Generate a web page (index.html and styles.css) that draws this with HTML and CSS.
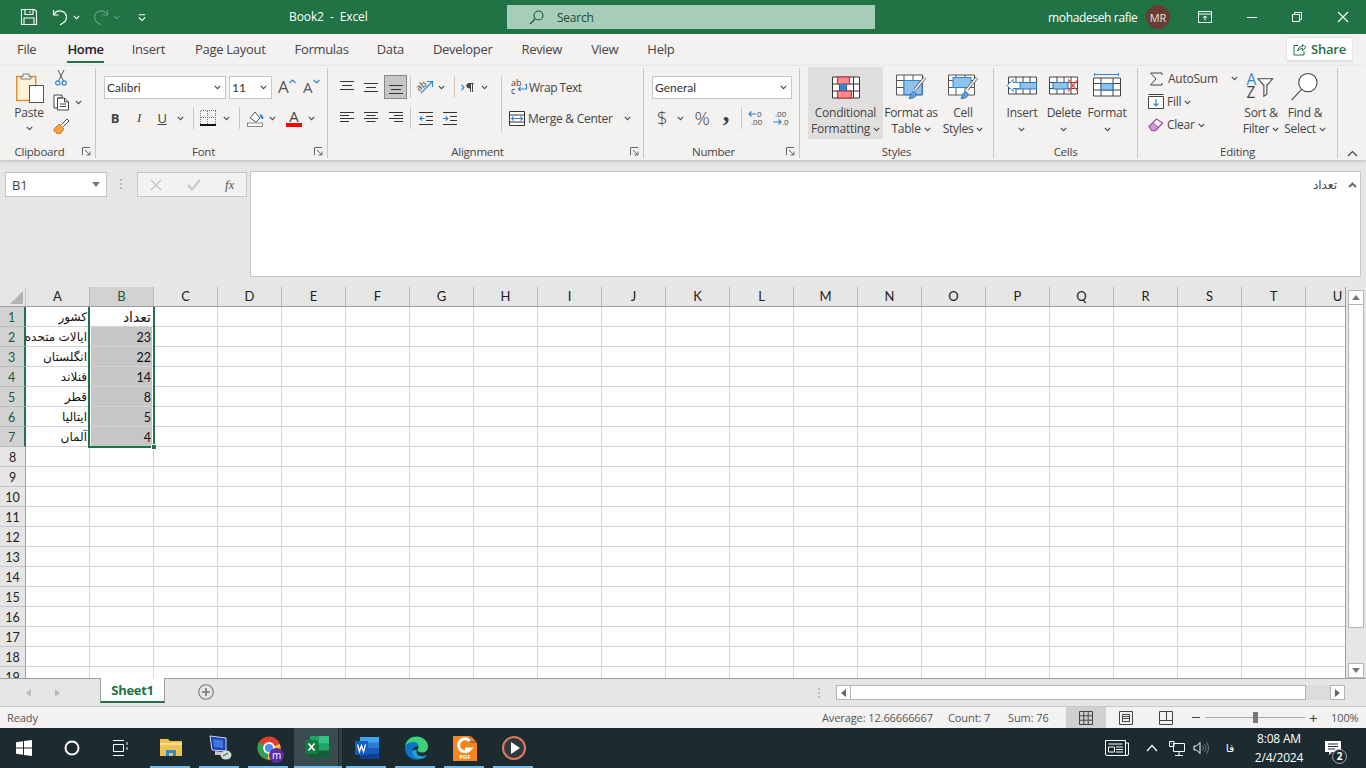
FILE: index.html
```html
<!DOCTYPE html>
<html lang="en">
<head>
<meta charset="utf-8">
<title>Book2 - Excel</title>
<link rel="stylesheet" href="styles.css">
</head>
<body>
<svg class="sprite" aria-hidden="true">
  <symbol id="caret" viewBox="0 0 9 6"><path d="M1 1l3.500 3.500L8 1" fill="none" stroke="#444" stroke-width="1.300"/></symbol>
  <symbol id="launch" viewBox="0 0 9 9"><path d="M.5 8V.5H8M3 3l5 5M8 4.500V8H4.500" fill="none" stroke="#666" stroke-width="1"/></symbol>
</svg>

<header class="titlebar">
  <div class="qat">
    <svg class="q-save" width="18" height="18" viewBox="0 0 18 18"><path d="M1.500 1.500h13l2 2v13h-15zM5 1.500v5h8v-5M4 16.500v-6.500h10v6.500M10 3v2" fill="none" stroke="#fff" stroke-width="1.100"/></svg>
    <svg class="q-undo" width="17" height="18" viewBox="0 0 17 18"><path d="M1.500 2v5h5M1.800 7C3.500 3.500 7 2.300 10.500 3.500c4.500 1.800 5 7 2.500 10L8 17" fill="none" stroke="#fff" stroke-width="1.200"/></svg>
    <svg class="q-caret" width="7" height="5" viewBox="0 0 9 6"><path d="M1 1l3.500 3.500L8 1" fill="none" stroke="#fff" stroke-width="1.300"/></svg>
    <svg class="q-redo" width="17" height="18" viewBox="0 0 17 18"><path d="M15.500 2v5h-5M15.200 7C13.500 3.500 10 2.300 6.500 3.500c-4.500 1.800-5 7-2.500 10L9 17" fill="none" stroke="#5f9c7d" stroke-width="1.200"/></svg>
    <svg class="q-caret2" width="7" height="5" viewBox="0 0 9 6"><path d="M1 1l3.500 3.500L8 1" fill="none" stroke="#5f9c7d" stroke-width="1.300"/></svg>
    <svg class="q-cust" width="8" height="9" viewBox="0 0 9 9"><path d="M1 1.500h7M1 4.500l3.500 3.500L8 4.500" fill="none" stroke="#fff" stroke-width="1.200"/></svg>
  </div>
  <div class="doc-title">Book2&nbsp; -&nbsp; Excel</div>
  <div class="search">
    <svg width="15" height="15" viewBox="0 0 15 15"><circle cx="9.500" cy="5.500" r="4.500" fill="none" stroke="#17593a" stroke-width="1.100"/><path d="M6 9l-5 5" stroke="#17593a" stroke-width="1.200"/></svg>
    <span>Search</span>
  </div>
  <div class="user">mohadeseh rafie</div>
  <div class="avatar">MR</div>
  <div class="win-btns">
    <svg width="14" height="12" viewBox="0 0 14 12"><path d="M.5.500h13v11H.500zM.5 3h13M7 9.500V5M5 6.800L7 5l2 1.800" fill="none" stroke="#fff"/></svg>
    <svg width="12" height="12" viewBox="0 0 12 12"><path d="M1 6.500h10" stroke="#fff"/></svg>
    <svg width="12" height="12" viewBox="0 0 12 12"><path d="M1.500 3.500h7v7h-7zM3.500 3.500v-2h7v7h-2" fill="none" stroke="#fff"/></svg>
    <svg width="12" height="12" viewBox="0 0 12 12"><path d="M1 1l10 10M11 1L1 11" stroke="#fff" stroke-width="1.100"/></svg>
  </div>
</header>

<nav class="tabs">
  <span class="tab">File</span>
  <span class="tab active">Home</span>
  <span class="tab">Insert</span>
  <span class="tab t-pl">Page Layout</span>
  <span class="tab t-fo">Formulas</span>
  <span class="tab">Data</span>
  <span class="tab">Developer</span>
  <span class="tab">Review</span>
  <span class="tab">View</span>
  <span class="tab">Help</span>
  <button class="share">
    <svg width="14" height="14" viewBox="0 0 14 14"><path d="M5 3.500H1v9.500h10V9M4.500 9c.5-3 2.500-4.500 5-4.500V2.500L13 5.500 9.500 8.500V6.500C7.500 6.500 5.500 7.500 4.500 9z" fill="none" stroke="#217346"/></svg>
    Share
  </button>
</nav>

<section class="ribbon">
  <!-- Clipboard -->
  <div class="group g-clip">
    <div class="body">
      <div class="paste">
        <svg width="30" height="32" viewBox="0 0 30 32"><rect x=".7" y="4.500" width="19" height="24" fill="#fdf3d8" stroke="#e08a2c" stroke-width="1.400"/><path d="M7 4.500V2h6v2.500h2v2.500H5V4.500z" fill="#f3f2f1" stroke="#777"/><rect x="13.500" y="13.500" width="14" height="17" fill="#fff" stroke="#555"/></svg>
        <span>Paste</span>
        <svg class="caret"><use href="#caret"/></svg>
      </div>
      <div class="clip-tools">
        <svg class="cut" width="12" height="17" viewBox="0 0 12 17"><path d="M3 1l5.500 11M9 1L3.500 12" stroke="#555" fill="none"/><circle cx="2.800" cy="14" r="2.100" fill="none" stroke="#2b88d8" stroke-width="1.200"/><circle cx="9.200" cy="14" r="2.100" fill="none" stroke="#2b88d8" stroke-width="1.200"/></svg>
        <div class="copy">
          <svg width="17" height="17" viewBox="0 0 17 17"><path d="M1 1h8v3H4.500v10H1zM4.500 4h7l4 4v8h-11zM11.500 4v4h4M7 10h6M7 12.500h6" fill="#fff" stroke="#444"/></svg>
          <svg class="caret"><use href="#caret"/></svg>
        </div>
        <svg class="painter" width="17" height="17" viewBox="0 0 17 17"><path d="M1 11l5-5 5 5-4 5-2-1-1 1-1-2-2-1z" fill="#f0a24a" stroke="#d9772a"/><path d="M8 7l6-6 2 2-6 6" fill="#fff" stroke="#444"/></svg>
      </div>
    </div>
    <div class="label with-launch">Clipboard<svg class="launch"><use href="#launch"/></svg></div>
  </div>

  <!-- Font -->
  <div class="group g-font">
    <div class="body col">
      <div class="row r-font1">
        <div class="select s-font"><span>Calibri</span><svg class="caret"><use href="#caret"/></svg></div>
        <div class="select s-size"><span>11</span><svg class="caret"><use href="#caret"/></svg></div>
        <div class="ab ab-up">A<svg width="7" height="5" viewBox="0 0 7 5"><path d="M.5 4l3-3 3 3" fill="none" stroke="#2b88d8" stroke-width="1.100"/></svg></div>
        <div class="ab ab-down">A<svg width="7" height="5" viewBox="0 0 7 5"><path d="M.5 1l3 3 3-3" fill="none" stroke="#2b88d8" stroke-width="1.100"/></svg></div>
      </div>
      <div class="row r-font2">
        <b class="ib w24 fmt-b">B</b>
        <i class="ib w24 fmt-i">I</i>
        <u class="ib w22 fmt-u">U</u>
        <span class="ib w14"><svg class="caret"><use href="#caret"/></svg></span>
        <span class="sep s1"></span>
        <span class="ib w24"><svg class="crisp" width="16" height="16" viewBox="0 0 16 16"><path d="M.5.500h15M.5 7.500h15M.5.500v14M7.500.500v14M15.500.500v14" fill="none" stroke="#777" stroke-dasharray="1 1"/><path d="M0 15h16" stroke="#111" stroke-width="1.500"/></svg></span>
        <span class="ib w12"><svg class="caret"><use href="#caret"/></svg></span>
        <span class="sep s2"></span>
        <span class="ib w24"><svg width="17" height="17" viewBox="0 0 17 17"><path d="M3 8l5-6 5 6-4 4z" fill="#fff" stroke="#555"/><path d="M13 5c2 1 2.500 3 2.500 4" fill="none" stroke="#2b88d8" stroke-width="2"/><rect x=".5" y="13" width="15" height="3.500" fill="#fff" stroke="#8a8886"/></svg></span>
        <span class="ib w11"><svg class="caret"><use href="#caret"/></svg></span>
        <span class="ib w24 ml4 color-a">A<em></em></span>
        <span class="ib w10"><svg class="caret"><use href="#caret"/></svg></span>
      </div>
    </div>
    <div class="label with-launch">Font<svg class="launch"><use href="#launch"/></svg></div>
  </div>

  <!-- Alignment -->
  <div class="group g-align">
    <div class="body">
      <div class="col">
        <div class="row">
          <span class="ib w24"><svg width="14" height="14" viewBox="0 0 14 14"><path d="M0 1.500h14M2 5.500h10M0 9.500h14" stroke="#333"/></svg></span>
          <span class="ib w24"><svg width="14" height="14" viewBox="0 0 14 14"><path d="M0 3.500h14M2 7.500h10M0 11.500h14" stroke="#333"/></svg></span>
          <span class="ib w23 ml1 pressed"><svg width="14" height="14" viewBox="0 0 14 14"><path d="M0 5.500h14M2 9.500h10M0 13.500h14" stroke="#333"/></svg></span>
          <span class="sep s3"></span>
          <span class="ib w22"><svg width="17" height="16" viewBox="0 0 17 16"><text class="ori" x="0" y="9" transform="rotate(-40 6 8)">ab</text><path d="M4 14L15 3M10 2.500h5.500V8" fill="none" stroke="#2b88d8" stroke-width="1.200"/></svg></span>
          <span class="ib w10"><svg class="caret"><use href="#caret"/></svg></span>
          <span class="sep s4"></span>
          <span class="ib w24 rtl-ic"><svg width="13" height="9" viewBox="0 0 13 9"><path d="M.5 2l2.500 2.500L.5 7" fill="none" stroke="#2b88d8" stroke-width="1.200"/><path d="M8 .5h4.500M8 .5a2.200 2.200 0 000 4.400h1.500V.5M9.500.5V9M11.500.5V9" fill="#444" stroke="#444"/></svg></span>
          <span class="ib w10"><svg class="caret"><use href="#caret"/></svg></span>
        </div>
        <div class="row">
          <span class="ib w24"><svg width="14" height="14" viewBox="0 0 14 14"><path d="M0 1.500h14M0 4.500h9M0 7.500h14M0 10.500h9" stroke="#333"/></svg></span>
          <span class="ib w24"><svg width="14" height="14" viewBox="0 0 14 14"><path d="M0 1.500h14M2.500 4.500h9M0 7.500h14M2.500 10.500h9" stroke="#333"/></svg></span>
          <span class="ib w23 ml1"><svg width="14" height="14" viewBox="0 0 14 14"><path d="M0 1.500h14M5 4.500h9M0 7.500h14M5 10.500h9" stroke="#333"/></svg></span>
          <span class="sep s3"></span>
          <span class="ib w24"><svg width="14" height="13" viewBox="0 0 14 13"><path d="M0 .5h14M7 4.500h7M7 8.500h7M0 12.500h14" stroke="#333"/><path d="M5.500 6.500H1M3 4.500l-2 2 2 2" fill="none" stroke="#2b88d8" stroke-width="1.200"/></svg></span>
          <span class="ib w24"><svg width="14" height="13" viewBox="0 0 14 13"><path d="M0 .5h14M7 4.500h7M7 8.500h7M0 12.500h14" stroke="#333"/><path d="M0 6.500h4.500M2.800 4.500l2 2-2 2" fill="none" stroke="#2b88d8" stroke-width="1.200"/></svg></span>
        </div>
      </div>
      <span class="sep tall"></span>
      <div class="col wrap-col">
        <div class="row">
          <svg class="wrap-ic" width="17" height="16" viewBox="0 0 17 16"><text class="ori" x="0" y="7">ab</text><text class="ori" x="0" y="15">c</text><path d="M14 5.500h1.500v4.500H7.500M9.500 8l-2 2 2 2" fill="none" stroke="#2b88d8" stroke-width="1.200"/></svg>
          <span class="txt t-wrap">Wrap Text</span>
        </div>
        <div class="row r-merge">
          <svg class="merge-ic" width="16" height="15" viewBox="0 0 16 15"><path d="M.5.500h15v14H.500zM.5 4h15M.5 11h15" fill="#fff" stroke="#333"/><path d="M2 7.500h12M4.500 5.500l-2 2 2 2M11.500 5.500l2 2-2 2" fill="none" stroke="#2b88d8" stroke-width="1.100"/></svg>
          <span class="txt t-merge">Merge &amp; Center</span>
          <svg class="caret c-merge"><use href="#caret"/></svg>
        </div>
      </div>
    </div>
    <div class="label with-launch">Alignment<svg class="launch"><use href="#launch"/></svg></div>
  </div>

  <!-- Number -->
  <div class="group g-num">
    <div class="body col">
      <div class="row"><div class="select s-num"><span>General</span><svg class="caret"><use href="#caret"/></svg></div></div>
      <div class="row r-num2">
        <span class="ib w24 big">$</span>
        <span class="ib w12"><svg class="caret"><use href="#caret"/></svg></span>
        <span class="ib w24 ml4 big">%</span>
        <span class="ib w24 comma">,</span>
        <span class="sep s5"></span>
        <span class="ib w24"><svg width="18" height="16" viewBox="0 0 18 16"><text class="dec" x="9" y="7">0</text><text class="dec" x="3" y="15">.00</text><path d="M8 4H1M3.500 1.500L1 4l2.500 2.500" fill="none" stroke="#2b88d8" stroke-width="1.100"/></svg></span>
        <span class="ib w24"><svg width="18" height="16" viewBox="0 0 18 16"><text class="dec" x="3" y="7">.00</text><text class="dec" x="10" y="15">.0</text><path d="M1 12h8M6.500 9.500L9 12l-2.500 2.500" fill="none" stroke="#2b88d8" stroke-width="1.100"/></svg></span>
      </div>
    </div>
    <div class="label with-launch">Number<svg class="launch"><use href="#launch"/></svg></div>
  </div>

  <!-- Styles -->
  <div class="group g-styles">
    <div class="body">
      <div class="lbtn hover w75">
        <svg width="30" height="28" viewBox="0 0 30 28"><path d="M1.500 4.500h27v21h-27zM1.500 11.500h27M1.500 18.500h27M8.500 4.500v21M15.500 4.500v21M22.500 4.500v21" fill="#fff" stroke="#333"/><rect x="6.500" y="4.500" width="12" height="7" fill="#f88a90" stroke="#d13438" stroke-width="1.200"/><rect x="8.500" y="11.500" width="7" height="7" fill="#2b88d8"/><rect x="6.500" y="18.500" width="14" height="7" fill="#f88a90" stroke="#d13438" stroke-width="1.200"/></svg>
        <span class="l2">Conditional<br>Formatting <svg class="caret"><use href="#caret"/></svg></span>
      </div>
      <div class="lbtn w56">
        <svg width="32" height="28" viewBox="0 0 32 28"><path d="M1.500 2.500h26v20h-26zM1.500 8h26M1.500 15h26M9 2.500v20M18 2.500v20" fill="#fff" stroke="#555"/><rect x="9" y="8" width="18" height="14" fill="#8fc3ee" stroke="#2b88d8"/><path d="M20 17L30 5" stroke="#555" stroke-width="3"/><path d="M20 17L30 5" stroke="#fff" stroke-width="1.500"/><path d="M14 26c3 0 7-1 7-4 0-3-3-3-4-2-2 1-1 4-3 6z" fill="#5ba3de" stroke="#2b72b0"/></svg>
        <span class="l2">Format as<br>Table <svg class="caret"><use href="#caret"/></svg></span>
      </div>
      <div class="lbtn w48">
        <svg width="32" height="28" viewBox="0 0 32 28"><path d="M1.500 2.500h26v20h-26zM1.500 8h26M1.500 15h26M9 2.500v20M18 2.500v20" fill="#fff" stroke="#555"/><rect x="6" y="5" width="18" height="10" fill="#8fc3ee" stroke="#2b88d8"/><path d="M20 17L30 5" stroke="#555" stroke-width="3"/><path d="M20 17L30 5" stroke="#fff" stroke-width="1.500"/><path d="M14 26c3 0 7-1 7-4 0-3-3-3-4-2-2 1-1 4-3 6z" fill="#5ba3de" stroke="#2b72b0"/></svg>
        <span class="l2">Cell<br>Styles <svg class="caret"><use href="#caret"/></svg></span>
      </div>
    </div>
    <div class="label">Styles</div>
  </div>

  <!-- Cells -->
  <div class="group g-cells">
    <div class="body">
      <div class="lbtn w42">
        <svg width="32" height="28" viewBox="0 0 32 28"><path d="M2.500 4.500h28v17h-28zM2.500 10h28M2.500 16h28M10 4.500v17M17 4.500v17M24 4.500v17" fill="#fff" stroke="#444"/><rect x="10" y="10" width="20.500" height="6.500" fill="#8fc3ee" stroke="#2b72b0"/><path d="M14 10H7V7l-6 6 6 6v-3h7z" fill="#fff" stroke="#2b88d8"/></svg>
        <span class="l2">Insert<br><svg class="caret"><use href="#caret"/></svg></span>
      </div>
      <div class="lbtn w42">
        <svg width="32" height="28" viewBox="0 0 32 28"><path d="M1.500 4.500h28v17h-28zM1.500 10h28M1.500 16h28M9 4.500v17M16 4.500v17M23 4.500v17" fill="#fff" stroke="#444"/><path d="M5 10h15v6.500H5z" fill="#8fc3ee" stroke="#2b72b0"/><path d="M20 7l10 12M30 7L20 19" stroke="#e8504f" stroke-width="1.300"/></svg>
        <span class="l2">Delete<br><svg class="caret"><use href="#caret"/></svg></span>
      </div>
      <div class="lbtn w44">
        <svg width="32" height="28" viewBox="0 0 32 28"><path d="M3.500.5v3M27.500.5v3M3.500 2h24" stroke="#2b88d8"/><path d="M2.500 5.500h27v18h-27zM2.500 11h27M2.500 17.500h27M10 5.500v18M22 5.500v18" fill="#fff" stroke="#444"/><rect x="10" y="11" width="12" height="6.500" fill="#8fc3ee" stroke="#2b72b0"/></svg>
        <span class="l2">Format<br><svg class="caret"><use href="#caret"/></svg></span>
      </div>
    </div>
    <div class="label">Cells</div>
  </div>

  <!-- Editing -->
  <div class="group g-edit">
    <div class="body">
      <div class="edit-col">
        <div class="e-row">
          <svg class="sum" width="14" height="14" viewBox="0 0 14 14"><path d="M13 3V1H1.500L7 7l-5.500 6H13v-2" fill="none" stroke="#444"/></svg>
          <span class="txt">AutoSum</span>
          <svg class="caret c-auto"><use href="#caret"/></svg>
        </div>
        <div class="e-row">
          <svg width="16" height="15" viewBox="0 0 16 15"><path d="M.5 2.500h15v12H.500z" fill="#fff" stroke="#444"/><path d="M.5.500h15" stroke="#444"/><path d="M8 5v7M5.500 9.500L8 12l2.500-2.500" fill="none" stroke="#2b88d8" stroke-width="1.200"/></svg>
          <span class="txt">Fill <svg class="caret"><use href="#caret"/></svg></span>
        </div>
        <div class="e-row">
          <svg width="16" height="15" viewBox="0 0 16 15"><path d="M1 9.500L8.500 2l6 4-7 7.500H4z" fill="#fff" stroke="#a64dad" stroke-width="1.300"/><path d="M1 9.500L5 6l5 4-3 3.500H4z" fill="#cf9ad6" stroke="#a64dad"/></svg>
          <span class="txt">Clear <svg class="caret"><use href="#caret"/></svg></span>
        </div>
      </div>
      <div class="lbtn w44">
        <svg width="32" height="30" viewBox="0 0 32 30"><text class="az az-a" x="1" y="13">A</text><text class="az" x="1" y="27">Z</text><path d="M13 6h15l-6 7v9l-3 2V13z" transform="translate(0 1)" fill="#fff" stroke="#444" stroke-width="1.100"/></svg>
        <span class="l2">Sort &amp;<br>Filter <svg class="caret"><use href="#caret"/></svg></span>
      </div>
      <div class="lbtn w44">
        <svg width="32" height="30" viewBox="0 0 32 30"><circle cx="19" cy="11" r="9.500" fill="#fff" stroke="#444" stroke-width="1.100"/><path d="M12.500 18L2 29" stroke="#444" stroke-width="1.100"/></svg>
        <span class="l2">Find &amp;<br>Select <svg class="caret"><use href="#caret"/></svg></span>
      </div>
    </div>
    <div class="label">Editing</div>
  </div>
  <div class="collapse"><svg width="11" height="7" viewBox="0 0 11 7"><path d="M1 6l4.500-4.500L10 6" fill="none" stroke="#444" stroke-width="1.200"/></svg></div>
</section>

<section class="formula">
  <div class="namebox"><span>B1</span><i class="tri"></i></div>
  <div class="dots"></div>
  <div class="fbtns">
    <svg width="12" height="12" viewBox="0 0 12 12"><path d="M1 1l10 10M11 1L1 11" stroke="#c8c6c4" stroke-width="1.400"/></svg>
    <svg width="14" height="12" viewBox="0 0 14 12"><path d="M1 6l4 4.500L13 1" fill="none" stroke="#c8c6c4" stroke-width="2"/></svg>
    <span class="fx">fx</span>
  </div>
  <div class="finput"><span dir="rtl">تعداد</span><svg width="9" height="6" viewBox="0 0 9 6"><path d="M1 5l3.500-3.500L8 5" fill="none" stroke="#666" stroke-width="1.800"/></svg></div>
</section>

<main class="sheet">
  <div class="sheet-main">
    <div class="colhdr">
      <div class="corner"><i></i></div>
      <span>A</span><span class="on">B</span><span>C</span><span>D</span><span>E</span><span>F</span><span>G</span><span>H</span><span>I</span><span>J</span><span>K</span><span>L</span><span>M</span><span>N</span><span>O</span><span>P</span><span>Q</span><span>R</span><span>S</span><span>T</span><span>U</span>
    </div>
    <div class="grid-wrap">
      <div class="rowhdr">
        <span class="on">1</span><span class="on">2</span><span class="on">3</span><span class="on">4</span><span class="on">5</span><span class="on">6</span><span class="on">7</span><span>8</span><span>9</span><span>10</span><span>11</span><span>12</span><span>13</span><span>14</span><span>15</span><span>16</span><span>17</span><span>18</span><span>19</span>
      </div>
      <div class="cells">
        <div class="c ar">کشور</div><div class="c ar b1">تعداد</div>
        <div class="c ar">ایالات متحده</div><div class="c hl">23</div>
        <div class="c ar">انگلستان</div><div class="c hl">22</div>
        <div class="c ar">فنلاند</div><div class="c hl">14</div>
        <div class="c ar">قطر</div><div class="c hl">8</div>
        <div class="c ar">ایتالیا</div><div class="c hl">5</div>
        <div class="c ar">آلمان</div><div class="c hl">4</div>
        <div class="sel"><i></i></div>
      </div>
    </div>
  </div>
  <div class="vscroll">
    <div class="sb-btn"><i class="tri up"></i></div>
    <div class="sb-thumb"></div>
    <div class="sb-rest"></div>
    <div class="sb-btn"><i class="tri"></i></div>
  </div>
</main>

<section class="sheetbar">
  <div class="nav-arrows"><i class="ar-l"></i><i class="ar-r"></i></div>
  <div class="sheet-tab">Sheet1</div>
  <svg class="add" width="16" height="16" viewBox="0 0 16 16"><circle cx="8" cy="8" r="7.300" fill="none" stroke="#777" stroke-width="1.100"/><path d="M8 4v8M4 8h8" stroke="#777" stroke-width="1.600"/></svg>
  <div class="vdots"></div>
  <div class="hscroll">
    <div class="hs-btn"><i class="ar-l dark"></i></div>
    <div class="hs-thumb"></div>
    <div class="hs-rest"></div>
    <div class="hs-btn"><i class="ar-r dark"></i></div>
  </div>
</section>

<footer class="status">
  <span class="ready">Ready</span>
  <span class="stat s-avg">Average: 12.66666667</span>
  <span class="stat s-cnt">Count: 7</span>
  <span class="stat s-sum">Sum: 76</span>
  <span class="view on"><svg width="14" height="14" viewBox="0 0 14 14"><path d="M.5.500h13v13H.500zM.5 4.800h13M.5 9.200h13M4.800.500v13M9.200.500v13" fill="none" stroke="#444"/></svg></span>
  <span class="view"><svg width="14" height="14" viewBox="0 0 14 14"><path d="M.5.500h13v13H.500zM3.500 3.500h7v7h-7zM3.500 5.500h7M3.500 7.500h7" fill="none" stroke="#444"/></svg></span>
  <span class="view"><svg width="14" height="14" viewBox="0 0 14 14"><path d="M.5.500h13v13H.500zM.5 9.500h13M7.500.500v9" fill="none" stroke="#444"/></svg></span>
  <span class="zoomctl">
    <i class="minus"></i>
    <span class="slider"><i></i></span>
    <span class="plus">+</span>
  </span>
  <span class="zoomval">100%</span>
</footer>

<footer class="taskbar">
  <span class="tb b48"><svg width="16" height="16" viewBox="0 0 16 16"><path d="M0 2.200l7-1v6.300H0zM8 1l8-1v7.500H8zM0 8.500h7v6.300l-7-1zM8 8.500h8V16l-8-1z" fill="#fff"/></svg></span>
  <span class="tb b48"><svg width="16" height="16" viewBox="0 0 16 16"><circle cx="8" cy="8" r="6.500" fill="none" stroke="#fff" stroke-width="2"/></svg></span>
  <span class="tb b50"><svg width="16" height="16" viewBox="0 0 16 16"><path d="M0 .5h11M0 15.500h11M.5 4.500h10v7H.500zM14 2v3M14 7v3" fill="none" stroke="#fff"/></svg></span>
  <span class="tb run"><svg width="22" height="20" viewBox="0 0 22 20"><path d="M0 1h8l2 2h12v15H0z" fill="#f2c14e"/><path d="M0 5h22v2H0z" fill="#fbe39b"/><path d="M6 12h10v6H6z" fill="#2b88d8"/><path d="M9 15h4v3H9z" fill="#f2c14e"/></svg></span>
  <span class="tb run"><svg width="24" height="26" viewBox="0 0 24 26"><path d="M2 1l16 2v13L4 15z" fill="#1b3fbf" stroke="#cfd8e6"/><path d="M5 4l10 1.200v8L6 12z" fill="#3f77e0"/><path d="M7 16l7 1v3H7z" fill="#c8c8c8"/><ellipse cx="18" cy="20" rx="5.500" ry="4.500" fill="#d8d8d8"/><path d="M15 21l5-3" stroke="#2d8f3c" stroke-width="1.400"/></svg></span>
  <span class="tb run chrome"><svg width="24" height="24" viewBox="0 0 24 24"><circle cx="12" cy="12" r="11.500" fill="#e33b2e"/><path d="M12 12L2 6a11.500 11.500 0 00-.5 10 11.500 11.500 0 009 7.500z" fill="#2ca24c"/><path d="M12 12l10.800-4a11.500 11.500 0 01-12.300 15.500z" fill="#f7c52b"/><circle cx="12" cy="12" r="5" fill="#4e8ff0" stroke="#fff" stroke-width="1.800"/></svg><b class="m">m</b></span>
  <span class="tb active-x"><svg width="24" height="22" viewBox="0 0 24 22"><rect x="5" y="0" width="19" height="22" rx="1" fill="#21a366"/><rect x="14" y="0" width="10" height="7.300" fill="#33c481"/><rect x="5" y="7.300" width="9" height="7.300" fill="#107c41"/><rect x="14" y="14.600" width="10" height="7.400" fill="#185c37"/><rect x="5" y="14.600" width="9" height="7.400" fill="#185c37"/><rect x="0" y="4" width="13" height="14" rx="1" fill="#107c41"/><path d="M3.500 7.500l6 7M9.500 7.500l-6 7" stroke="#fff" stroke-width="1.800"/></svg></span>
  <span class="tb run"><svg width="24" height="22" viewBox="0 0 24 22"><rect x="5" y="0" width="19" height="22" rx="1" fill="#2b7cd3"/><rect x="5" y="0" width="19" height="5.500" fill="#41a5ee"/><rect x="5" y="11" width="19" height="5.500" fill="#185abd"/><rect x="5" y="16.500" width="19" height="5.500" fill="#103f91"/><rect x="0" y="4" width="13" height="14" rx="1" fill="#185abd"/><path d="M2.500 7.500l2 7 2-6 2 6 2-7" fill="none" stroke="#fff" stroke-width="1.300"/></svg></span>
  <span class="tb run"><svg width="24" height="24" viewBox="0 0 24 24"><path d="M1 12C1 5 6 .5 12.500.5 19 .5 24 5 24 10.500c0 4-3 6-6 6-2.500 0-4.500-1-4.500-2.500 0-1 1-1.500 1-3 0-2.500-2.500-4-5-4C5 7 1 9 1 12z" fill="#3ed07a"/><path d="M1 12c0-3 3.500-6 8.500-6 3 0 5 2 5 4.500-4 0-6.500 2-6.500 5.500 0 3.500 3 6.500 7 7.500C7.500 25 1 19.500 1 12z" fill="#0c73c8"/><path d="M8 16c0 4 3.500 7 7.500 7 3 0 6-1.500 7.500-4-2 1-4 1.500-6 1-4-.5-5-3-4-6-3-.5-5 .5-5 2z" fill="#1aa3d9"/></svg></span>
  <span class="tb run"><svg width="24" height="26" viewBox="0 0 24 26"><path d="M0 1h17l7 7v18H0z" fill="#f7851f"/><path d="M17 0l7 7h-7z" fill="#f7851f" stroke="#1b2b30" stroke-width=".6"/><path d="M17 6a6.500 6.500 0 10.500 8H12" fill="none" stroke="#fff" stroke-width="3"/><text class="pdf" x="12" y="24">PDF</text></svg></span>
  <span class="tb run"><svg width="24" height="24" viewBox="0 0 24 24"><circle cx="12" cy="12" r="11" fill="#333a3f" stroke="#e0785a" stroke-width="2"/><path d="M9 6l9 6-9 6z" fill="#fff"/></svg></span>
  <span class="tray">
    <svg width="24" height="16" viewBox="0 0 24 16"><path d="M.5.500h20v15H2a1.500 1.500 0 01-1.500-1.500zM20.500 3h3v11a1.500 1.500 0 01-1.500 1.500h-1.500M3.500 7h6v5h-6zM11 7h7M11 9.500h7M11 12h7M3.500 4h14" fill="none" stroke="#fff"/></svg>
    <svg class="t-up" width="12" height="8" viewBox="0 0 12 8"><path d="M1 7l5-5.500L11 7" fill="none" stroke="#fff" stroke-width="1.200"/></svg>
    <svg class="t-net" width="16" height="15" viewBox="0 0 16 15"><path d="M4.500 2.500h11v8h-11zM10 10.500V14M6 14.500h8M.5.500h4.500v5H.500zM2.500 2.500h.5" fill="none" stroke="#fff"/></svg>
    <svg class="t-snd" width="16" height="14" viewBox="0 0 16 14"><path d="M1 5v4h2.500L7 12.500v-11L3.500 5z" fill="none" stroke="#fff"/><path d="M9.500 4.500a3.500 3.500 0 010 5M11.500 3a6 6 0 010 8M13.500 1.500a8.500 8.500 0 010 11" fill="none" stroke="#777"/></svg>
    <span class="t-fa" dir="rtl">فا</span>
    <span class="clock">8:08 AM<br>2/4/2024</span>
    <span class="notif"><svg width="16" height="15" viewBox="0 0 16 15"><path d="M0 0h16v11H7l-3 3v-3H0z" fill="#fff"/><path d="M3 3h10M3 5.500h10M3 8h7" stroke="#1b2b30"/></svg><b>2</b></span>
  </span>
</footer>
</body>
</html>
```
FILE: styles.css
```css
* { box-sizing: border-box; }
html, body { margin: 0; padding: 0; width: 1366px; height: 768px; overflow: hidden; }
body {
  font-family: "Open Sans", "Noto Sans", "Liberation Sans", sans-serif;
  font-size: 12px;
  letter-spacing: -0.25px;
  color: #444;
  background: #f3f2f1;
  display: flex;
  flex-direction: column;
}
.sprite { display: none; }
svg { display: block; flex: none; overflow: visible; }
.crisp { shape-rendering: crispEdges; }
.caret { width: 7px; height: 5px; display: inline-block; vertical-align: middle; }

/* title bar */
.titlebar { height: 34px; background: #217346; color: #fff; display: flex; align-items: center; flex: none; }
.qat { width: 289px; padding-left: 20px; display: flex; align-items: center; }
.q-undo { margin-left: 14px; }
.q-caret { margin-left: 4px; }
.q-redo { margin-left: 12px; }
.q-caret2 { margin-left: 4px; }
.q-cust { margin-left: 18px; }
.doc-title { width: 218px; font-size: 12px; letter-spacing: -0.1px; padding-bottom: 2px; }
.search { width: 368px; height: 24px; background: #a6cdb8; display: flex; align-items: center; padding-left: 22px; gap: 13px; color: #1d4a33; }
.user { margin-left: 173px; width: 98px; font-size: 12px; letter-spacing: -0.35px; }
.avatar { width: 24px; height: 24px; border-radius: 50%; background: #693d33; color: #e6e0dc; font-size: 11px; display: flex; align-items: center; justify-content: center; letter-spacing: 0; }
.win-btns { margin-left: 28px; width: 168px; display: flex; align-items: center; justify-content: space-between; padding-right: 17px; }

/* tabs */
.tabs { height: 32px; flex: none; display: flex; align-items: center; padding-left: 17px; gap: 29px; font-size: 13px; color: #444; position: relative; padding-bottom: 2px; }
.tab { line-height: 28px; height: 28px; letter-spacing: -0.3px; }
.tab.active { color: #222; font-weight: 600; border-bottom: 2px solid #217346; margin-left: 2px; margin-right: -1px; }
.t-pl { margin-left: 1px; }
.t-fo { margin-right: -1px; }
.share { margin-left: auto; margin-right: 13px; width: 67px; height: 24px; background: #fff; border: 1px solid #e8e6e4; border-radius: 2px; box-shadow: 0 1px 1px #ddd; color: #217346; font: 600 13px "Open Sans", sans-serif; display: flex; align-items: center; justify-content: center; gap: 4px; padding: 0; letter-spacing: -0.2px; }

/* ribbon */
.ribbon { height: 94px; flex: none; display: flex; background: #f3f2f1; box-shadow: 0 1px 3px #b8b8b8; position: relative; z-index: 2; }
.group { display: flex; flex-direction: column; height: 90px; margin-top: 2px; border-right: 1px solid #c8c6c4; position: relative; }
.g-clip { width: 96px; } .g-font { width: 232px; } .g-align { width: 316px; } .g-num { width: 156px; }
.g-styles { width: 194px; } .g-cells { width: 144px; } .g-edit { width: 200px; }
.body { flex: 1; display: flex; min-height: 0; }
.col { display: flex; flex-direction: column; gap: 7px; padding-top: 7px; }
.row { display: flex; align-items: center; height: 24px; }
.label { height: 14px; line-height: 16px; text-align: center; color: #444; font-size: 11.500px; flex: none; }
.label.with-launch { padding-right: 16px; }
.launch { position: absolute; right: 4px; bottom: 2px; width: 9px; height: 9px; }

.ib { height: 24px; display: flex; align-items: center; justify-content: center; flex: none; }
.w24 { width: 24px; } .w23 { width: 23px; } .w22 { width: 22px; } .w14 { width: 14px; } .w12 { width: 12px; } .w11 { width: 11px; } .w10 { width: 10px; }
.ml1 { margin-left: 1px; } .ml4 { margin-left: 4px; }
.sep { width: 1px; height: 22px; background: #c8c6c4; flex: none; }
.s1 { margin: 0 2px 0 6px; } .s2 { margin: 0 3px 0 7px; } .s3 { margin: 0 3px; } .s4 { margin: 0 0 0 8px; } .s5 { margin: 0 3px; }
.sep.tall { height: 56px; margin: 8px 7px 0 5px; }
.pressed { background: #c8c6c4; border: 1px solid #8a8886; }

/* clipboard */
.paste { width: 44px; margin-left: 7px; padding-top: 4px; display: flex; flex-direction: column; align-items: center; }
.paste > svg:first-child { margin-left: 4px; }
.paste span { margin-top: 1px; line-height: 16px; }
.paste .caret { margin-top: 5px; }
.clip-tools { margin-left: 2px; padding-top: 1px; display: flex; flex-direction: column; }
.cut { margin-left: 2px; }
.copy { margin-top: 8px; display: flex; align-items: center; gap: 5px; }
.painter { margin-top: 7px; }

/* font */
.g-font .col { padding-left: 7px; }
.select { height: 23px; background: #fff; border: 1px solid #c8c6c4; display: flex; align-items: center; justify-content: space-between; padding: 0 4px 0 2px; color: #333; flex: none; }
.s-font { width: 122px; margin-left: 1px; font: 12px Lato, sans-serif; letter-spacing: 0; }
.s-size { width: 43px; margin-left: 3px; font: 12px Lato, sans-serif; letter-spacing: 0; }
.s-num { width: 140px; margin-left: 8px; font: 12px Lato, sans-serif; letter-spacing: 0; }
.ab { display: flex; align-items: flex-start; font: 17px "Open Sans", sans-serif; color: #555; letter-spacing: 0; height: 24px; line-height: 24px; }
.ab svg { margin-top: 4px; }
.ab-up { margin-left: 6px; width: 22px; }
.ab-down { margin-left: 3px; font-size: 15px; }
.fmt-b { font: 700 13px "Open Sans", sans-serif; }
.fmt-i { font: italic 13px "Liberation Serif", serif; }
.fmt-u { font-size: 13px; text-decoration: underline; }
.color-a { flex-direction: column; font: 15px "Open Sans", sans-serif; line-height: 14px; letter-spacing: 0; }
.color-a em { display: block; width: 16px; height: 4px; background: #f00; }
.ori { font: 9px "Open Sans", sans-serif; fill: #444; letter-spacing: 0; }
.dec { font: 8px "Open Sans", sans-serif; fill: #444; letter-spacing: 0; }

/* alignment */
.g-align .body > .col:first-child { padding-left: 7px; width: 168px; }
.txt { font-size: 12px; }
.wrap-ic { margin-left: 2px; }
.t-wrap { margin-left: 1px; letter-spacing: -0.5px; }
.merge-ic { margin-left: 0; }
.t-merge { margin-left: 3px; }
.r-merge { padding-top: 1px; }
.c-merge { margin-left: 11px; }

/* number */
.big { font-size: 19px; color: #444; font-weight: 300; }
.comma { font: 700 27px/24px "Liberation Serif", serif; color: #444; padding-bottom: 12px; }
.g-num .r-num2 { margin-left: 6px; }

/* large buttons */
.lbtn { height: 72px; margin-top: -1px; padding-top: 5px; display: flex; flex-direction: column; align-items: center; flex: none; }
.lbtn > svg { height: 29px; }
.lbtn .l2 { margin-top: 4px; line-height: 16px; text-align: center; white-space: nowrap; }
.lbtn.hover { background: #e1dfdd; }
.w75 { width: 75px; } .w56 { width: 56px; } .w48 { width: 48px; } .w42 { width: 42px; } .w44 { width: 44px; }
.g-styles .body { padding-left: 8px; }
.g-cells .body { padding-left: 7px; }

/* editing */
.g-edit .body { padding-left: 10px; }
.edit-col { width: 91px; margin-top: -1px; display: flex; flex-direction: column; }
.e-row { height: 23px; display: flex; align-items: center; gap: 3px; }
.sum { margin: 0 2px 0 1px; }
.c-auto { margin-left: 10px; }
.az { font: 16px "Open Sans", sans-serif; fill: #444; letter-spacing: 0; }
.az-a { fill: #2b88d8; }
.collapse { flex: 1; display: flex; align-items: flex-end; justify-content: center; padding-bottom: 3px; }

/* formula */
.formula { height: 127px; flex: none; background: #e6e6e6; padding: 11px 5px 10px; display: flex; align-items: flex-start; }
.namebox { width: 102px; height: 25px; margin-top: 1px; background: #fff; border: 1px solid #c6c6c6; display: flex; align-items: center; justify-content: space-between; padding: 0 6px; font: 13px "Open Sans", sans-serif; color: #444; }
.tri { display: block; width: 0; height: 0; border: 4px solid transparent; border-top: 5px solid #777; border-bottom: 0; }
.tri.up { border-top: 0; border-bottom: 5px solid #777; }
.dots { width: 2px; height: 10px; margin: 8px 15px 0 13px; background: repeating-linear-gradient(#bbb 0 2px, transparent 2px 4px); flex: none; }
.fbtns { width: 110px; height: 25px; margin-top: 1px; border: 1px solid #c6c6c6; background: #f3f2f1; display: flex; align-items: center; padding: 0 12px; justify-content: space-between; }
.fx { font: italic 13px "Liberation Serif", serif; color: #555; }
.finput { width: 1111px; height: 106px; margin-left: 3px; background: #fff; border: 1px solid #c6c6c6; display: flex; justify-content: flex-end; padding: 6px 3px 0 0; gap: 11px; font: 12px "Liberation Sans", "DejaVu Sans", sans-serif; color: #444; letter-spacing: 0; }
.finput svg { margin-top: 4px; }

/* sheet */
.sheet { height: 391px; flex: none; display: flex; background: #e6e6e6; font-family: Lato, "Liberation Sans", sans-serif; letter-spacing: 0; }
.sheet-main { width: 1346px; display: flex; flex-direction: column; overflow: hidden; border-right: 1px solid #9f9f9f; }
.colhdr { height: 20px; display: flex; flex: none; border-bottom: 1px solid #9f9f9f; }
.corner { width: 26px; flex: none; border-right: 1px solid #c6c6c6; position: relative; overflow: hidden; }
.corner i { position: absolute; right: 2px; bottom: 2px; width: 0; height: 0; border-style: solid; border-width: 0 0 13px 13px; border-color: transparent transparent #b4b4b4 transparent; }
.colhdr span { width: 64px; flex: none; text-align: center; line-height: 19px; font-size: 13px; color: #222; border-right: 1px solid #b8b8b8; }
.colhdr span.on { background: #d2d2d2; color: #185c37; }
.grid-wrap { flex: 1; display: flex; overflow: hidden; }
.rowhdr { width: 26px; flex: none; display: flex; flex-direction: column; }
.rowhdr span { height: 20px; flex: none; text-align: center; line-height: 21px; font-size: 12.500px; color: #222; border-right: 1px solid #9f9f9f; border-bottom: 1px solid #c6c6c6; }
.rowhdr span.on { background: #d2d2d2; color: #185c37; border-right: 2px solid #217346; border-bottom-color: #bbb; padding-right: 1px; }
.cells {
  flex: 1; position: relative; display: grid; grid-template-columns: repeat(2, 64px); grid-auto-rows: 20px; align-content: start;
  background-color: #fff;
  background-image: linear-gradient(to left, #d4d4d4 1px, transparent 1px), linear-gradient(to top, #d4d4d4 1px, transparent 1px);
  background-size: 64px 20px;
}
.c { height: 19px; padding: 0 2px; text-align: right; font: 12.500px/21px Lato, "DejaVu Sans", sans-serif; color: #111; white-space: nowrap; overflow: hidden; }
.c.ar { direction: rtl; text-align: right; width: 63px; font: 12px/20px "Liberation Sans", "DejaVu Sans", sans-serif; }
.c.ar.b1 { font-size: 14px; }
.c.hl { background: #c6c6c6; width: 61px; margin-left: 1px; padding-right: 1px; height: 19px; }
.sel { position: absolute; left: 62px; top: -2px; width: 67px; height: 143px; border: 2px solid #217346; pointer-events: none; }
.sel i { position: absolute; right: -4px; bottom: -4px; width: 6px; height: 6px; background: #217346; border: 1px solid #fff; }

/* scrollbar */
.vscroll { width: 20px; padding: 3px 2px 0 2px; display: flex; flex-direction: column; }
.sb-btn { height: 15px; flex: none; background: #fff; border: 1px solid #b4b4b4; display: flex; align-items: center; justify-content: center; }
.sb-thumb { height: 323px; flex: none; background: #fff; border: 1px solid #b4b4b4; border-top: 0; }
.sb-rest { flex: 1; }

/* sheet bar */
.sheetbar { height: 29px; flex: none; background: #e6e6e6; border-top: 1px solid #9f9f9f; border-bottom: 1px solid #c8c6c4; display: flex; position: relative; z-index: 1; }
.nav-arrows { width: 100px; display: flex; align-items: center; padding-left: 26px; gap: 24px; }
.ar-l, .ar-r { display: block; width: 0; height: 0; border: 4px solid transparent; }
.ar-l { border-right: 5px solid #bbb; border-left: 0; }
.ar-r { border-left: 5px solid #bbb; border-right: 0; }
.ar-l.dark { border-right-color: #666; } .ar-r.dark { border-left-color: #666; }
.sheet-tab { width: 65px; height: 25px; margin-top: -1px; background: #fff; border: 1px solid #9f9f9f; border-top: 0; border-bottom: 2px solid #217346; color: #217346; font: 700 13px/24px "Open Sans", sans-serif; text-align: center; letter-spacing: -0.3px; }
.add { margin: 5px 0 0 33px; }
.vdots { width: 2px; height: 10px; margin: 9px 0 0 604px; background: repeating-linear-gradient(#bbb 0 2px, transparent 2px 4px); }
.hscroll { margin: 6px 0 0 16px; width: 509px; height: 15px; display: flex; }
.hs-btn { width: 15px; flex: none; background: #fff; border: 1px solid #b4b4b4; display: flex; align-items: center; justify-content: center; }
.hs-thumb { width: 455px; flex: none; background: #fff; border: 1px solid #b4b4b4; border-left: 0; }
.hs-rest { flex: 1; background: #dcdcdc; }

/* status */
.status { height: 21px; flex: none; display: flex; align-items: center; background: #f3f2f1; font-size: 11px; color: #555; letter-spacing: -0.1px; }
.ready { margin-left: 7px; width: 815px; padding-bottom: 1px; }
.stat { white-space: nowrap; padding-bottom: 1px; }
.s-avg { width: 126px; } .s-cnt { width: 60px; } .s-sum { width: 58px; }
.view { width: 40px; height: 21px; display: flex; align-items: center; justify-content: center; flex: none; }
.view.on { background: #d2d0ce; }
.zoomctl { margin-left: 6px; display: flex; align-items: center; width: 139px; }
.minus { width: 8px; height: 1px; background: #444; }
.slider { margin-left: 5px; width: 100px; height: 1px; background: #aaa; position: relative; }
.slider i { position: absolute; left: 48px; top: -5px; width: 5px; height: 11px; background: #777; }
.plus { margin-left: 4px; font-size: 15px; line-height: 16px; color: #444; }
.zoomval { font-size: 11px; }

/* taskbar */
.taskbar { height: 40px; flex: none; background: #1b2b30; display: flex; align-items: stretch; color: #fff; font-family: "Open Sans", sans-serif; }
.tb { display: flex; align-items: center; justify-content: center; flex: none; position: relative; }
.b48 { width: 48px; } .b50 { width: 50px; }
.tb.run { width: 49px; }
.tb.run::after { content: ""; position: absolute; left: 4px; right: 5px; bottom: 0; height: 2px; background: #76b9ed; }
.active-x { width: 48px; margin-left: 1px; background: linear-gradient(to right, #3a4b50 44px, #1b2b30 44px 45px, #2e3f44 45px); border-bottom: 2px solid #76b9ed; padding-right: 2px; }
.m { position: absolute; left: 25px; top: 20px; width: 15px; height: 15px; border-radius: 50%; background: #5a2ea6; font: 400 10px/14px "Open Sans", sans-serif; text-align: center; }
.pdf { font: 700 6px "Open Sans", sans-serif; fill: #fff; text-anchor: middle; letter-spacing: 0; }
.tray { margin-left: auto; display: flex; align-items: center; padding-right: 25px; }
.t-up { margin-left: 17px; }
.t-net { margin-left: 11px; }
.t-snd { margin-left: 8px; }
.t-fa { margin-left: 9px; width: 24px; font: 11px "Liberation Sans", "DejaVu Sans", sans-serif; text-align: center; }
.clock { margin-left: 6px; width: 62px; text-align: center; font-size: 12px; line-height: 19px; letter-spacing: -0.2px; }
.notif { margin-left: 15px; position: relative; display: block; }
.notif b { position: absolute; left: 7px; top: 8px; width: 15px; height: 15px; border-radius: 50%; background: #1b2b30; border: 1px solid #aaa; font: 700 10px/13px "Open Sans", sans-serif; text-align: center; }
```
